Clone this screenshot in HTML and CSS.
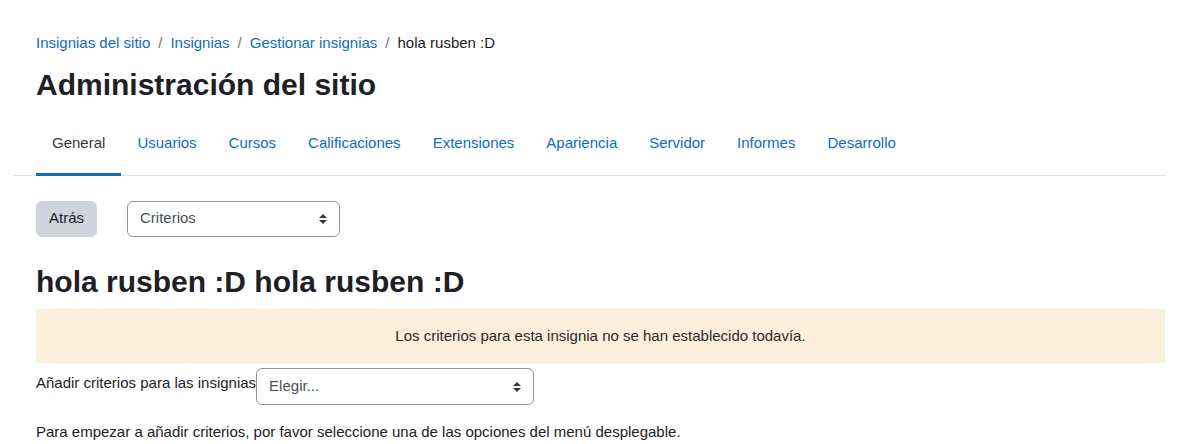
FILE: index.html
```html
<!DOCTYPE html>
<html lang="es">
<head>
<meta charset="utf-8">
<title>Administración del sitio</title>
<link rel="stylesheet" href="styles.css">
</head>
<body>
<div class="page">
  <header class="page-header">
    <nav class="breadcrumb">
      <a href="#">Insignias del sitio</a><span class="sep">/</span>
      <a href="#">Insignias</a><span class="sep">/</span>
      <a href="#">Gestionar insignias</a><span class="sep">/</span>
      <span class="current">hola rusben :D</span>
    </nav>
    <h1 class="page-title">Administración del sitio</h1>
  </header>

  <nav class="secondary-nav">
    <a class="tab active" href="#">General</a>
    <a class="tab" href="#">Usuarios</a>
    <a class="tab" href="#">Cursos</a>
    <a class="tab" href="#">Calificaciones</a>
    <a class="tab" href="#">Extensiones</a>
    <a class="tab" href="#">Apariencia</a>
    <a class="tab" href="#">Servidor</a>
    <a class="tab" href="#">Informes</a>
    <a class="tab" href="#">Desarrollo</a>
  </nav>

  <div class="tertiary">
    <button class="btn-secondary" type="button">Atrás</button>
    <div class="select-wrap select-criterios">
      <select class="custom-select"><option>Criterios</option></select>
      <svg class="select-arrow" viewBox="0 0 4 5" width="8" height="10"><path d="M2 0L0 2h4zm0 5L0 3h4z" fill="#343a40"/></svg>
    </div>
  </div>

  <h2 class="badge-title">hola rusben :D hola rusben :D</h2>

  <div class="alert-warning">Los criterios para esta insignia no se han establecido todavía.</div>

  <div class="add-row">
    <label class="add-label">Añadir criterios para las insignias</label>
    <div class="select-wrap select-elegir">
      <select class="custom-select"><option>Elegir...</option></select>
      <svg class="select-arrow" viewBox="0 0 4 5" width="8" height="10"><path d="M2 0L0 2h4zm0 5L0 3h4z" fill="#343a40"/></svg>
    </div>
  </div>

  <p class="help">Para empezar a añadir criterios, por favor seleccione una de las opciones del menú desplegable.</p>
</div>
</body>
</html>
```

FILE: styles.css
```css
* { box-sizing: border-box; }
html, body { margin: 0; padding: 0; background: #fff; }
body {
  font-family: "Liberation Sans", Arial, sans-serif;
  font-size: 15px;
  line-height: 22.5px;
  color: #1d2125;
}
a { color: #0f6cbf; text-decoration: none; }

.page {
  padding: 32px 12px 0 36px;
}

.breadcrumb {
  display: flex;
  align-items: center;
  white-space: nowrap;
}
.breadcrumb .sep {
  color: #6a737b;
  padding: 0 8px;
}
.breadcrumb .current { color: #1d2125; }

.page-title {
  margin: 12px 0 0;
  font-size: 30px;
  line-height: 36px;
  font-weight: 700;
  color: #1d2125;
}

.secondary-nav {
  display: flex;
  margin: 12px -1px 0 -23px;
  padding-left: 23px;
  border-bottom: 1px solid #dee2e6;
  height: 61px;
}
.secondary-nav .tab {
  display: flex;
  align-items: center;
  height: 61px;
  margin-bottom: -1px;
  padding: 0 16px;
  border-bottom: 3px solid transparent;
  color: #0f6cbf;
  white-space: nowrap;
}
.secondary-nav .tab.active {
  color: #373a3c;
  border-bottom-color: #0f6cbf;
}

.tertiary {
  display: flex;
  align-items: center;
  gap: 30px;
  margin-top: 25px;
}
.btn-secondary {
  font: inherit;
  color: #1d2125;
  background: #ced4da;
  border: 1px solid #ced4da;
  border-radius: 6px;
  height: 36px;
  padding: 0 12px;
}

.select-wrap {
  position: relative;
  display: inline-block;
}
.custom-select {
  appearance: none;
  -webkit-appearance: none;
  font: inherit;
  color: #495057;
  background: #fff;
  border: 1px solid #8f959e;
  border-radius: 6px;
  padding: 0 36px 0 12px;
  width: 100%;
  display: block;
}
.select-criterios { width: 213px; }
.select-criterios .custom-select { height: 36px; }
.select-elegir { width: 278px; }
.select-elegir .custom-select { height: 37px; }
.select-arrow {
  position: absolute;
  right: 13px;
  top: 50%;
  margin-top: -5px;
  pointer-events: none;
}

.badge-title {
  margin: 27px 0 0;
  font-size: 30px;
  line-height: 36px;
  font-weight: 700;
  color: #1d2125;
}

.alert-warning {
  margin-top: 9px;
  background: #fcefdc;
  border: 1px solid #fcefdc;
  color: #2b2a28;
  text-align: center;
  padding: 15px 20px;
}

.add-row {
  display: flex;
  align-items: flex-start;
  margin-top: 5px;
}
.add-label {
  padding-top: 4px;
  color: #1d2125;
}

.help {
  margin: 16px 0 0;
}
```
